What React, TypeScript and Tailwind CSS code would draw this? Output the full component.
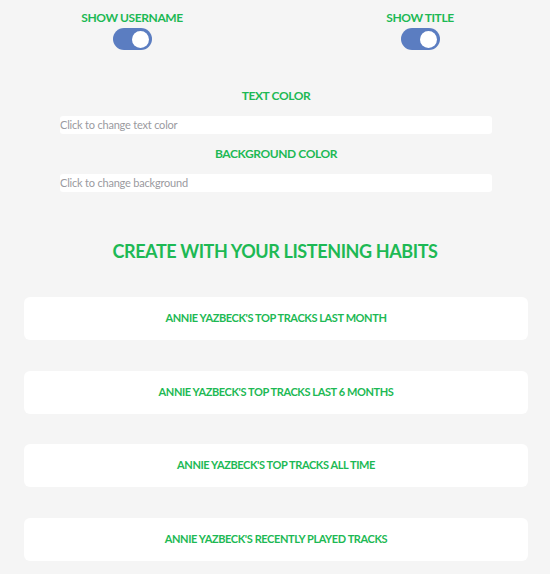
import React from 'react'

const font = { fontFamily: 'Lato, "Noto Sans", sans-serif' }

function Toggle({ label }: { label: string }) {
  return (
    <div className="flex flex-col items-center">
      <p className="text-[12px] font-bold leading-[16px] tracking-[-0.4px] text-[#1db954]">{label}</p>
      <div className="mt-[2px] flex h-[22px] w-[39px] items-center justify-end rounded-full bg-[#5b7dc1] px-[3px]">
        <span className="h-[17px] w-[17px] rounded-full bg-white" />
      </div>
    </div>
  )
}

function ColorField({ label, placeholder }: { label: string; placeholder: string }) {
  return (
    <div className="flex flex-col items-center">
      <p className="text-[12px] font-bold leading-[16px] tracking-[-0.4px] text-[#1db954]">{label}</p>
      <div className="mt-[12px] h-[18px] w-[432px] rounded-[3px] bg-white text-left text-[11px] leading-[18px] tracking-[-0.2px] text-[#9a9aa0]">
        {placeholder}
      </div>
    </div>
  )
}

const CARDS = [
  "ANNIE YAZBECK'S TOP TRACKS LAST MONTH",
  "ANNIE YAZBECK'S TOP TRACKS LAST 6 MONTHS",
  "ANNIE YAZBECK'S TOP TRACKS ALL TIME",
  "ANNIE YAZBECK'S RECENTLY PLAYED TRACKS",
]

export default function App() {
  return (
    <div className="min-h-[574px] w-[550px] bg-[#f5f5f5] pt-[10px]" style={font}>
      {/* Toggles */}
      <div className="flex">
        <div className="ml-[32px] w-[200px]">
          <Toggle label="SHOW USERNAME" />
        </div>
        <div className="ml-[120px] w-[136px]">
          <Toggle label="SHOW TITLE" />
        </div>
      </div>

      {/* Colors */}
      <div className="mt-[38px] flex flex-col gap-[12px] pl-[60px] pr-[58px]">
        <ColorField label="TEXT COLOR" placeholder="Click to change text color" />
        <ColorField label="BACKGROUND COLOR" placeholder="Click to change background" />
      </div>

      <h2 className="mt-[47px] text-center text-[18px] font-bold leading-[24px] tracking-[-0.4px] text-[#1db954]">
        CREATE WITH YOUR LISTENING HABITS
      </h2>

      {/* Listening habits */}
      <div className="mt-[34px] flex flex-col gap-[30.5px] pl-[24px] pr-[22px] pb-[15px]">
        {CARDS.map((c) => (
          <div
            key={c}
            className="flex h-[43px] items-center justify-center rounded-[6px] bg-white text-[11px] font-bold tracking-[-0.4px] text-[#1db954]"
          >
            {c}
          </div>
        ))}
      </div>
    </div>
  )
}
